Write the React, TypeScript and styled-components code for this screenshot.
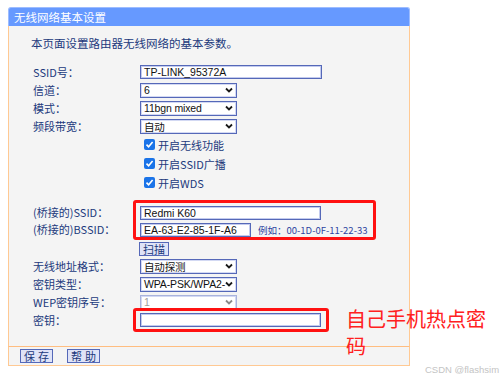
import styled, { createGlobalStyle } from "styled-components";

const GlobalStyle = createGlobalStyle`
  html, body {
    margin: 0;
    padding: 0;
    background: #ffffff;
  }
  body {
    font-family: "Noto Sans CJK SC", "Liberation Sans", sans-serif;
  }
`;

const Page = styled.div`
  position: relative;
  width: 500px;
  height: 383px;
  padding: 7px 0 0 8px;
  box-sizing: border-box;
`;

const Panel = styled.div`
  position: relative;
  width: 402px;
`;

const Header = styled.div`
  height: 19px;
  line-height: 19px;
  background: #6699ff;
  border: 1px solid #9dbcff;
  border-bottom: none;
  border-radius: 3px 3px 0 0;
  box-sizing: border-box;
  padding-left: 5px;
  color: #ffffff;
  font-size: 11.5px;
`;

const Body = styled.div`
  background: #f4f4f4;
  border-left: 1px solid #ffc993;
  border-right: 1px solid #ffc993;
  padding: 9px 0 17px 24px;
`;

const Intro = styled.div`
  margin-left: -2px;
  height: 16px;
  line-height: 16px;
  font-size: 11.5px;
  color: #22397c;
  margin-bottom: 12px;
`;

const Row = styled.div<{ $h?: number }>`
  display: flex;
  align-items: center;
  height: ${({ $h }) => $h ?? 18}px;
`;

const Label = styled.div<{ $w?: number }>`
  width: ${({ $w }) => $w ?? 107}px;
  flex-shrink: 0;
  font-size: 11px;
  color: #22397c;
  white-space: nowrap;
`;

const TextInput = styled.div<{ $w: number }>`
  width: ${({ $w }) => $w}px;
  height: 14px;
  box-sizing: border-box;
  background: #ffffff;
  border: 1px solid #5568b8;
  box-shadow: inset 0 0 0 1px #c3cbee;
  padding-left: 3px;
  font-family: "Liberation Sans", "Noto Sans CJK SC", sans-serif;
  font-size: 10.5px;
  line-height: 12px;
  color: #111111;
  white-space: nowrap;
  overflow: hidden;
`;

const SelectBox = styled.div<{ $disabled?: boolean }>`
  width: 97px;
  height: 15px;
  box-sizing: border-box;
  background: #ffffff;
  border: 1px solid ${({ $disabled }) => ($disabled ? "#a9b3dc" : "#5568b8")};
  box-shadow: inset 0 0 0 1px #d3d9f3;
  display: flex;
  align-items: center;
  gap: 1px;
  padding: 0 3px 0 3px;
  font-family: "Liberation Sans", "Noto Sans CJK SC", sans-serif;
  font-size: 10.5px;
  color: ${({ $disabled }) => ($disabled ? "#a0a0a0" : "#111111")};
`;

const SelectText = styled.span`
  flex: 1;
  min-width: 0;
  white-space: nowrap;
  letter-spacing: -0.15px;
`;

const Chevron = ({ muted }: { muted?: boolean }) => (
  <svg width="8" height="6" viewBox="0 0 8 6" style={{ flexShrink: 0 }}>
    <polyline
      points="1,1.5 4,4.5 7,1.5"
      fill="none"
      stroke={muted ? "#8a8a8a" : "#1a1a1a"}
      strokeWidth="1.8"
    />
  </svg>
);

const Select = ({ value, disabled }: { value: string; disabled?: boolean }) => (
  <SelectBox $disabled={disabled}>
    <SelectText>{value}</SelectText>
    <Chevron muted={disabled} />
  </SelectBox>
);

const CheckRow = styled.div`
  display: flex;
  align-items: center;
  height: 19px;
  padding-left: 111px;
  gap: 3px;
  font-size: 11px;
  color: #22397c;
`;

const CheckMark = styled.span`
  width: 11px;
  height: 11px;
  border-radius: 2px;
  background: #1a73e8;
  display: flex;
  align-items: center;
  justify-content: center;
`;

const BridgeGroup = styled.div`
  display: flex;
  margin-top: 8px;
`;

const BridgeLabels = styled.div`
  width: 100px;
  padding-top: 4px;
  display: flex;
  flex-direction: column;
`;

const BridgeLabel = styled(Label)`
  height: 17px;
  line-height: 17px;
`;

const RedBox = styled.div`
  border: 3px solid #ff1111;
  border-radius: 3px;
  display: flex;
  flex-direction: column;
  gap: 3px;
`;

const BridgeFields = styled(RedBox)`
  width: 243px;
  box-sizing: border-box;
  padding: 3px 0 0 4px;
`;

const FieldLine = styled.div`
  display: flex;
  align-items: center;
  gap: 7px;
`;

const Hint = styled.span`
  font-size: 9.5px;
  color: #2d44a0;
  white-space: nowrap;
`;

const KeyBox = styled(RedBox)`
  margin: -3px 0 -3px -7px;
  padding: 2px 5px 2px 4px;
`;

const SmallButton = styled.div`
  height: 14px;
  box-sizing: border-box;
  border: 1px solid #5568b8;
  background: #dfe3f7;
  padding: 0 3px;
  font-size: 11px;
  line-height: 12px;
  color: #22397c;
  white-space: nowrap;
`;

const ScanRow = styled(Row)`
  height: 16px;
  margin-top: 1px;
  padding-left: 106px;
`;

const Footer = styled.div`
  height: 20px;
  box-sizing: border-box;
  background: #f4f4f4;
  border: 1px solid #ffc993;
  border-top-color: #ffbd80;
  display: flex;
  align-items: center;
  gap: 14px;
  padding-left: 11px;
`;

const FooterButton = styled(SmallButton)`
  width: 33px;
  text-align: center;
  padding: 0;
  letter-spacing: 3px;
  text-indent: 3px;
`;

const Annotation = styled.div`
  position: absolute;
  left: 338px;
  top: 298px;
  width: 148px;
  font-size: 20px;
  line-height: 27px;
  color: #ff2020;
`;

const Watermark = styled.div`
  position: absolute;
  left: 425px;
  top: 364px;
  font-family: "Liberation Sans", sans-serif;
  font-size: 9.5px;
  color: #c4c4c4;
  white-space: nowrap;
`;

const Check = () => (
  <CheckMark>
    <svg width="9" height="9" viewBox="0 0 9 9">
      <polyline
        points="1.5,4.6 3.6,6.8 7.6,2"
        fill="none"
        stroke="#ffffff"
        strokeWidth="1.6"
      />
    </svg>
  </CheckMark>
);

function App() {
  return (
    <Page>
      <GlobalStyle />
      <Panel>
        <Header>无线网络基本设置</Header>
        <Body>
          <Intro>本页面设置路由器无线网络的基本参数。</Intro>

          <Row>
            <Label>SSID号：</Label>
            <TextInput $w={182}>TP-LINK_95372A</TextInput>
          </Row>
          <Row>
            <Label>信道：</Label>
            <Select value="6" />
          </Row>
          <Row>
            <Label>模式：</Label>
            <Select value="11bgn mixed" />
          </Row>
          <Row>
            <Label>频段带宽：</Label>
            <Select value="自动" />
          </Row>

          <CheckRow>
            <Check />
            开启无线功能
          </CheckRow>
          <CheckRow>
            <Check />
            开启SSID广播
          </CheckRow>
          <CheckRow>
            <Check />
            开启WDS
          </CheckRow>

          <BridgeGroup>
            <BridgeLabels>
              <BridgeLabel>(桥接的)SSID：</BridgeLabel>
              <BridgeLabel>(桥接的)BSSID：</BridgeLabel>
            </BridgeLabels>
            <BridgeFields>
              <TextInput $w={181}>Redmi K60</TextInput>
              <FieldLine>
                <TextInput $w={111}>EA-63-E2-85-1F-A6</TextInput>
                <Hint>例如：00-1D-0F-11-22-33</Hint>
              </FieldLine>
            </BridgeFields>
          </BridgeGroup>

          <ScanRow>
            <SmallButton>扫描</SmallButton>
          </ScanRow>

          <Row>
            <Label>无线地址格式：</Label>
            <Select value="自动探测" />
          </Row>
          <Row>
            <Label>密钥类型：</Label>
            <Select value="WPA-PSK/WPA2-" />
          </Row>
          <Row>
            <Label>WEP密钥序号：</Label>
            <Select value="1" disabled />
          </Row>
          <Row>
            <Label>密钥：</Label>
            <KeyBox>
              <TextInput $w={181} />
            </KeyBox>
          </Row>
        </Body>
        <Footer>
          <FooterButton>保存</FooterButton>
          <FooterButton>帮助</FooterButton>
        </Footer>
        <Annotation>自己手机热点密码</Annotation>
      </Panel>
      <Watermark>CSDN @flashsim</Watermark>
    </Page>
  );
}

export default App;
